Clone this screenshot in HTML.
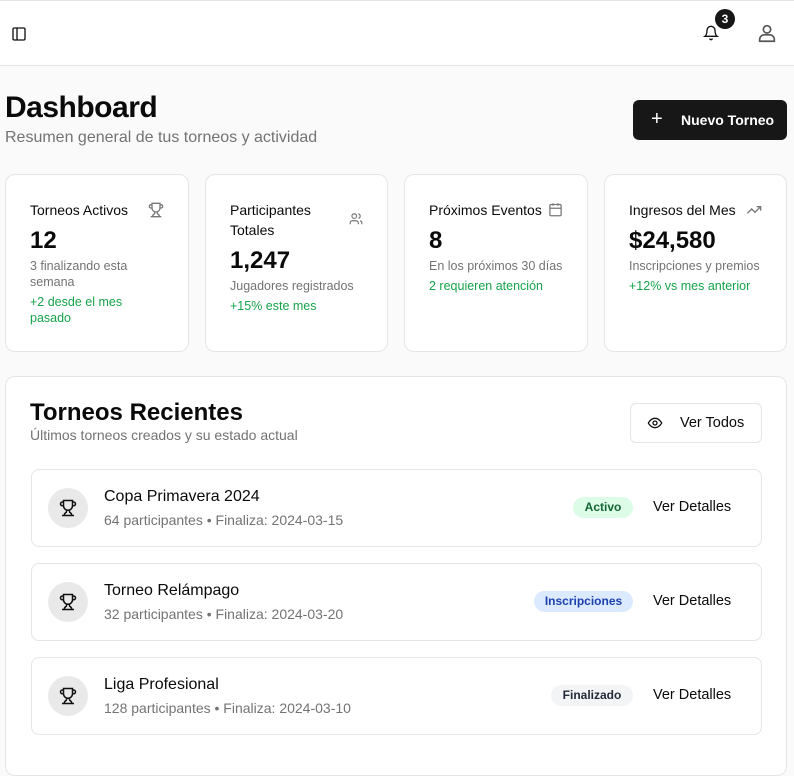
<!DOCTYPE html>
<html><head><meta charset="utf-8"><style>
*{box-sizing:border-box;margin:0;padding:0}
body{width:794px;height:742px;overflow:hidden;background:#fafafa;font-family:"Liberation Sans",sans-serif;color:#0a0a0a;position:relative}
.hdr{position:absolute;left:0;top:0;width:794px;height:66px;background:#fff;border-top:1px solid #e5e5e5;border-bottom:1px solid #e5e5e5}
.abs{position:absolute}
h1{position:absolute;left:5px;top:91px;font-size:30px;font-weight:700;letter-spacing:-0.5px}
.sub{position:absolute;left:5px;top:128px;font-size:16px;color:#737373}
.btn{position:absolute;left:633px;top:100px;width:154px;height:40px;background:#171717;border-radius:6px;color:#fff;font-size:14px;font-weight:700}
.card{position:absolute;top:174px;height:178px;background:#fff;border:1px solid #e5e5e5;border-radius:10px;padding:25px 24px}
.ct{font-size:14px;line-height:20px}
.cv{font-size:24px;font-weight:700;margin-top:6px;line-height:30px}
.cs{font-size:12.5px;color:#737373;line-height:16px;margin-top:2px}
.cg{font-size:12.5px;color:#16a34a;line-height:16px;margin-top:4px}
.ic{position:absolute;right:24px;top:27px}
.big{position:absolute;left:5px;top:376px;width:782px;height:400px;background:#fff;border:1px solid #e5e5e5;border-radius:10px}
.row{position:absolute;left:25px;width:731px;height:78px;border:1px solid #e5e5e5;border-radius:8px}
.circ{position:absolute;left:16px;top:18px;width:40px;height:40px;border-radius:50%;background:#e9e9e9}
.nm{position:absolute;left:72px;top:18px;font-size:16px}
.mt{position:absolute;left:72px;top:42px;font-size:14px;color:#737373}
.badge{position:absolute;top:27px;height:21px;border-radius:11px;font-size:12px;font-weight:700;line-height:21px;text-align:center}
.vd{position:absolute;left:621px;top:29px;font-size:14.5px;font-weight:500}
</style></head><body>
<div class="hdr">
<svg class="abs" style="left:11px;top:25px" width="16" height="16" viewBox="0 0 24 24" fill="none" stroke="#111" stroke-width="2"><rect x="3" y="3" width="18" height="18" rx="2"/><path d="M9 3v18"/></svg>
<svg class="abs" style="left:703px;top:24px" width="16" height="16" viewBox="0 0 24 24" fill="none" stroke="#111" stroke-width="2" stroke-linecap="round"><path d="M6 8a6 6 0 0 1 12 0c0 7 3 9 3 9H3s3-2 3-9"/><path d="M10.3 21a1.94 1.94 0 0 0 3.4 0"/></svg>
<div class="abs" style="left:715px;top:8px;width:20px;height:20px;border-radius:50%;background:#171717;color:#fff;font-size:12px;font-weight:700;text-align:center;line-height:20px">3</div>
<svg class="abs" style="left:756px;top:21px" width="22" height="22" viewBox="0 0 24 24" fill="none" stroke="#555" stroke-width="1.8"><circle cx="12" cy="8" r="4"/><path d="M4 21v-2a5 5 0 0 1 5-5h6a5 5 0 0 1 5 5v2z"/></svg>
</div>
<h1>Dashboard</h1>
<div class="sub" style="top:129px">Resumen general de tus torneos y actividad</div>
<div class="btn"><span class="abs" style="left:18px;top:8px;font-size:20px;font-weight:400">+</span><span class="abs" style="left:48px;top:12px">Nuevo Torneo</span></div>

<div class="card" style="left:5px;width:184px"><div class="ct">Torneos Activos</div><div class="cv">12</div><div class="cs" style="width:110px">3 finalizando esta semana</div><div class="cg" style="width:110px">+2 desde el mes pasado</div>
<svg class="ic" width="16" height="16" viewBox="0 0 24 24" fill="none" stroke="#777" stroke-width="2"><path d="M6 9H4.5a2.5 2.5 0 0 1 0-5H6M18 9h1.5a2.5 2.5 0 0 0 0-5H18M4 22h16M10 14.7V17c0 .6-.5 1-1 1.2C7.8 18.8 7 20.2 7 22M14 14.7V17c0 .6.5 1 1 1.2 1.2.6 2 2 2 3.8M18 2H6v7a6 6 0 0 0 12 0V2z"/></svg></div>
<div class="card" style="left:205px;width:183px"><div class="ct" style="width:100px">Participantes Totales</div><div class="cv">1,247</div><div class="cs">Jugadores registrados</div><div class="cg">+15% este mes</div>
<svg class="ic" style="top:37px" width="14" height="14" viewBox="0 0 24 24" fill="none" stroke="#777" stroke-width="2"><path d="M16 21v-2a4 4 0 0 0-4-4H6a4 4 0 0 0-4 4v2"/><circle cx="9" cy="7" r="4"/><path d="M22 21v-2a4 4 0 0 0-3-3.9M16 3.1a4 4 0 0 1 0 7.8"/></svg></div>
<div class="card" style="left:404px;width:184px"><div class="ct">Próximos Eventos</div><div class="cv">8</div><div class="cs">En los próximos 30 días</div><div class="cg">2 requieren atención</div>
<svg class="ic" width="15" height="15" viewBox="0 0 24 24" fill="none" stroke="#777" stroke-width="2"><rect x="3" y="4" width="18" height="18" rx="2"/><path d="M16 2v4M8 2v4M3 10h18M8 14h.01M12 14h.01M16 14h.01M8 18h.01M12 18h.01M16 18h.01"/></svg></div>
<div class="card" style="left:604px;width:183px"><div class="ct">Ingresos del Mes</div><div class="cv">$24,580</div><div class="cs">Inscripciones y premios</div><div class="cg">+12% vs mes anterior</div>
<svg class="ic" width="16" height="16" viewBox="0 0 24 24" fill="none" stroke="#777" stroke-width="2"><path d="M22 7l-8.5 8.5-5-5L2 17M16 7h6v6"/></svg></div>

<div class="big">
<div class="abs" style="left:24px;top:22px;font-size:24px;font-weight:700">Torneos Recientes</div>
<div class="abs" style="left:24px;top:50px;font-size:14px;color:#737373">Últimos torneos creados y su estado actual</div>
<div class="abs" style="left:624px;top:26px;width:132px;height:40px;border:1px solid #e5e5e5;border-radius:6px">
<svg class="abs" style="left:16px;top:11px" width="16" height="16" viewBox="0 0 24 24" fill="none" stroke="#111" stroke-width="2"><path d="M2 12s3.5-7 10-7 10 7 10 7-3.5 7-10 7S2 12 2 12z"/><circle cx="12" cy="12" r="3"/></svg>
<span class="abs" style="left:49px;top:11px;font-size:14.5px;font-weight:500">Ver Todos</span></div>
<div class="row" style="top:92px"><div class="circ"><svg class="abs" style="left:11px;top:11px" width="18" height="18" viewBox="0 0 24 24" fill="none" stroke="#111" stroke-width="2"><path d="M6 9H4.5a2.5 2.5 0 0 1 0-5H6M18 9h1.5a2.5 2.5 0 0 0 0-5H18M4 22h16M10 14.7V17c0 .6-.5 1-1 1.2C7.8 18.8 7 20.2 7 22M14 14.7V17c0 .6.5 1 1 1.2 1.2.6 2 2 2 3.8M18 2H6v7a6 6 0 0 0 12 0V2z"/></svg></div><div class="nm">Copa Primavera 2024</div><div class="mt">64 participantes • Finaliza: 2024-03-15</div><div class="badge" style="left:541px;width:60px;background:#dcfce7;color:#166534">Activo</div><div class="vd">Ver Detalles</div></div>
<div class="row" style="top:186px"><div class="circ"><svg class="abs" style="left:11px;top:11px" width="18" height="18" viewBox="0 0 24 24" fill="none" stroke="#111" stroke-width="2"><path d="M6 9H4.5a2.5 2.5 0 0 1 0-5H6M18 9h1.5a2.5 2.5 0 0 0 0-5H18M4 22h16M10 14.7V17c0 .6-.5 1-1 1.2C7.8 18.8 7 20.2 7 22M14 14.7V17c0 .6.5 1 1 1.2 1.2.6 2 2 2 3.8M18 2H6v7a6 6 0 0 0 12 0V2z"/></svg></div><div class="nm">Torneo Relámpago</div><div class="mt">32 participantes • Finaliza: 2024-03-20</div><div class="badge" style="left:502px;width:99px;background:#dbeafe;color:#1e40af">Inscripciones</div><div class="vd">Ver Detalles</div></div>
<div class="row" style="top:280px"><div class="circ"><svg class="abs" style="left:11px;top:11px" width="18" height="18" viewBox="0 0 24 24" fill="none" stroke="#111" stroke-width="2"><path d="M6 9H4.5a2.5 2.5 0 0 1 0-5H6M18 9h1.5a2.5 2.5 0 0 0 0-5H18M4 22h16M10 14.7V17c0 .6-.5 1-1 1.2C7.8 18.8 7 20.2 7 22M14 14.7V17c0 .6.5 1 1 1.2 1.2.6 2 2 2 3.8M18 2H6v7a6 6 0 0 0 12 0V2z"/></svg></div><div class="nm">Liga Profesional</div><div class="mt">128 participantes • Finaliza: 2024-03-10</div><div class="badge" style="left:519px;width:82px;background:#f3f4f6;color:#1f2937">Finalizado</div><div class="vd">Ver Detalles</div></div>
</div>
</body></html>
